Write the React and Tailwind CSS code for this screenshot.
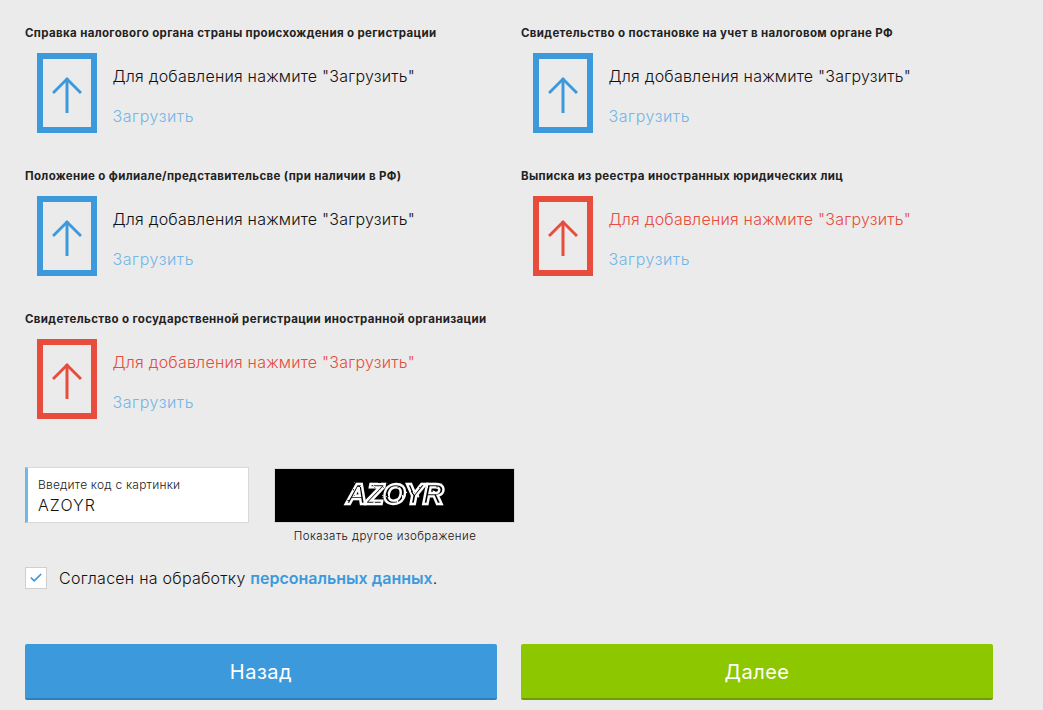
import { Check } from 'lucide-react';

const docs = [
  { title: 'Справка налогового органа страны происхождения о регистрации' },
  { title: 'Свидетельство о постановке на учет в налоговом органе РФ' },
  { title: 'Положение о филиале/представительсве (при наличии в РФ)' },
  { title: 'Выписка из реестра иностранных юридических лиц', error: true },
  { title: 'Свидетельство о государственной регистрации иностранной организации', error: true },
];

function UploadBox({ title, error }) {
  return (
    <div className="h-[143px]">
      <div className="h-[28px] text-[11.5px] leading-[16px] font-bold text-[#222] tracking-[0.35px] whitespace-nowrap">{title}</div>
      <div className="flex pl-3">
        <div className={`w-[60px] h-[80px] border-[6px] flex items-center justify-center ${error ? 'border-[#e74c3c] text-[#e74c3c]' : 'border-[#3c9adc] text-[#3c9adc]'}`}>
          <svg width="30" height="37" viewBox="0 0 30 37" fill="none" stroke="currentColor" strokeWidth="3" className="mt-[2px]">
            <path d="M15 37V2" />
            <path d="M1 17L15 3l14 14" />
          </svg>
        </div>
        <div className="ml-[15.5px]">
          <div className="mt-[12px] text-[16px] leading-[22px] font-light tracking-[0.21px] whitespace-nowrap">
            <span className={error ? 'text-[#e74c3c]' : 'text-[#111]'}>Для добавления нажмите "Загрузить"</span>
          </div>
          <div className="mt-[18px] text-[16px] leading-[22px] font-light tracking-[0.55px] text-[#74b6e6]">Загрузить</div>
        </div>
      </div>
    </div>
  );
}

export default function App() {
  return (
    <div className="w-[1043px] h-[710px] overflow-hidden bg-[#ebebeb] pl-[25px] pt-[25px] font-['Inter',sans-serif]">
      <svg width="0" height="0" className="absolute">
        <filter id="jag">
          <feTurbulence type="fractalNoise" baseFrequency="0.2" numOctaves="2" seed="4" />
          <feDisplacementMap in="SourceGraphic" scale="2" />
        </filter>
      </svg>

      <div className="grid grid-cols-[472px_472px] gap-x-6">
        {docs.map(d => <UploadBox key={d.title} title={d.title} error={d.error} />)}
      </div>

      <div className="flex mt-[13px]">
        <div className="w-[224px] h-[56px] bg-white border border-[#d9d9d9] border-l-[3px] border-l-[#74b6e6] pl-[10px] pt-[9px]">
          <div className="text-[12px] leading-[16px] font-light text-[#222] tracking-[0.2px]">Введите код с картинки</div>
          <div className="mt-[1px] text-[16px] leading-[22px] font-light text-[#111] tracking-[1.1px]">AZOYR</div>
        </div>
        <div className="ml-[25px] w-[241px]">
          <div className="h-[55px] mt-[1px] bg-black border border-[#d9d9d9] flex items-center justify-center">
            <span className="text-[29px] leading-none font-bold italic text-black [-webkit-text-stroke:2.4px_white] [filter:url(#jag)] font-['Liberation_Sans',sans-serif] tracking-[-1px] mt-[-3px]">AZOYR</span>
          </div>
          <div className="mt-[5px] text-center text-[11.5px] leading-[16px] font-light text-[#111] tracking-[0.45px] mr-[19px]">Показать другое изображение</div>
        </div>
      </div>

      <div className="flex items-center mt-[22px]">
        <div className="w-[22px] h-[22px] bg-white border border-[#cfcfcf] flex items-center justify-center text-[#3c9adc]">
          <Check size={14} strokeWidth={3} />
        </div>
        <div className="ml-3 text-[16px] font-light text-[#111] tracking-[0.25px]">
          Согласен на обработку <span className="font-semibold text-[#3c9adc] tracking-[0px]">персональных данных</span>.
        </div>
      </div>

      <div className="grid grid-cols-[472px_472px] gap-x-6 mt-[54px]">
        <div className="h-[56px] pt-[2px] rounded-[2px] bg-[#3c9adc] border-b-2 border-b-[#2f7fb8] flex items-center justify-center text-white text-[20px] tracking-[0.5px]">Назад</div>
        <div className="h-[56px] pt-[2px] rounded-[2px] bg-[#8dc700] border-b-2 border-b-[#6f9c00] flex items-center justify-center text-white text-[20px] tracking-[0.5px]">Далее</div>
      </div>
    </div>
  );
}
